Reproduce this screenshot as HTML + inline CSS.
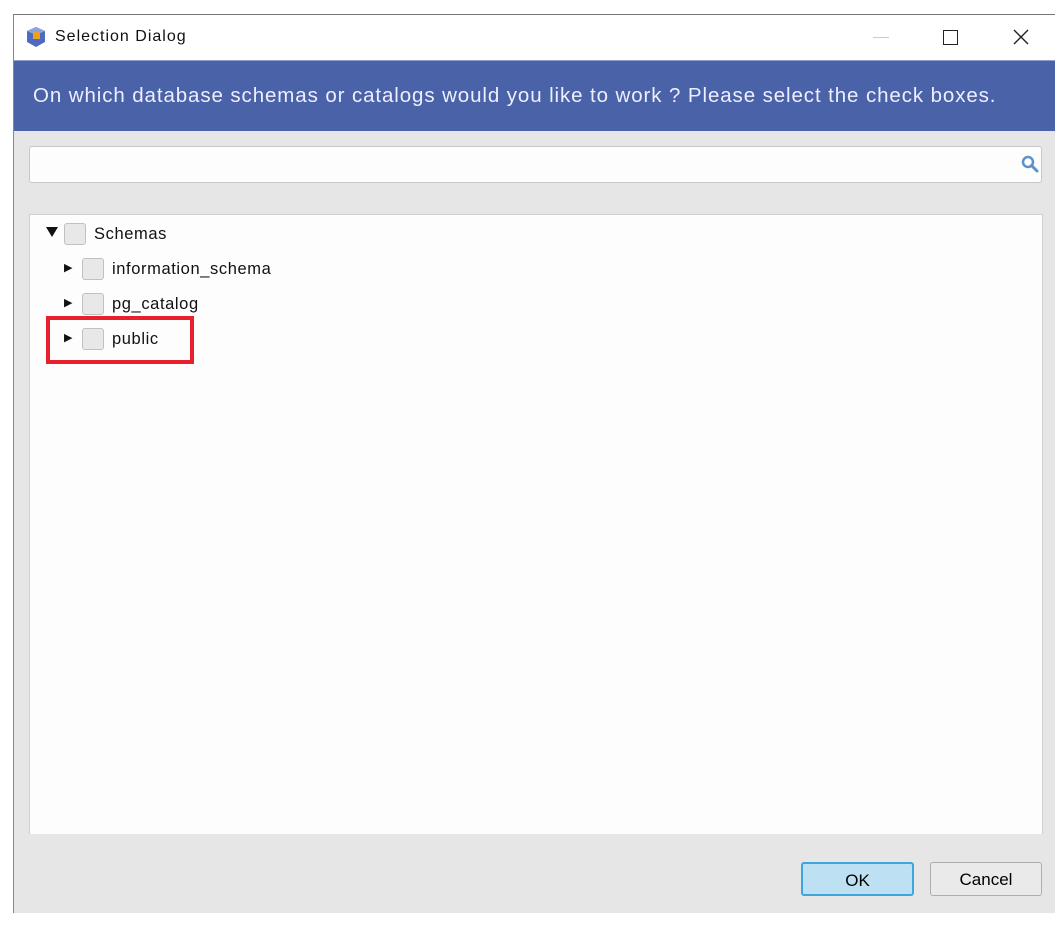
<!DOCTYPE html>
<html><head><style>
body{margin:0;width:1064px;height:926px;background:#fff;position:relative;font-family:"Liberation Sans",sans-serif;overflow:hidden}
.win{position:absolute;left:13px;top:14px;width:1041px;height:898px;border-top:1px solid #777;border-left:1px solid #888;background:#e6e6e6}
.tb{position:absolute;left:0;top:0;width:1041px;height:45px;background:#fff}
.title{position:absolute;left:41px;top:13px;font-size:16px;color:#111;letter-spacing:1px}
.blue{position:absolute;left:0;top:45px;width:1041px;height:70px;background:#4a63a8;border-top:1px solid #8da0d0}
.blue span{position:absolute;left:19px;top:23px;font-size:20.5px;color:#eef;letter-spacing:0.9px;white-space:nowrap}
.search{position:absolute;left:15px;top:131px;width:1011px;height:35px;background:#fdfdfd;border:1px solid #c8c8c8;border-radius:3px}
.tree{position:absolute;left:15px;top:199px;width:1012px;height:619px;background:#fdfdfd;border:1px solid #d0d0d0;border-bottom:none}
.row{position:absolute;height:24px;font-size:16.5px;color:#111;letter-spacing:0.6px;white-space:nowrap}
.cb{position:absolute;width:22px;height:22px;border:1px solid #c0c0c0;border-radius:3px;background:#e8e8e8;box-sizing:border-box}
.arr{position:absolute;font-size:11px}
.lbl{position:absolute;top:2px}
.btn{position:absolute;top:847px;height:34px;border-radius:3px;font-size:17px;text-align:center;line-height:33px;box-sizing:border-box}
</style></head><body>
<div class="win">
<div class="tb">
<svg style="position:absolute;left:10px;top:10px" width="24" height="24" viewBox="0 0 24 24"><path d="M12 2 L21 6 V17 L12 22 L3 17 V6Z" fill="#4d6bbf"/><path d="M12 2 L21 6 L12 10 L3 6Z" fill="#8aa3e0"/><rect x="9" y="7" width="7" height="7" fill="#f0a020"/></svg>
<div class="title">Selection Dialog</div>
<div style="position:absolute;left:859px;top:22px;width:16px;height:1px;background:#ccc"></div>
<div style="position:absolute;left:929px;top:15px;width:13px;height:13px;border:1.5px solid #222"></div>
<svg style="position:absolute;left:999px;top:14px" width="16" height="16"><path d="M1 1L15 15M15 1L1 15" stroke="#222" stroke-width="1.4"/></svg>
</div>
<div class="blue"><span>On which database schemas or catalogs would you like to work ? Please select the check boxes.</span></div>
<div class="search"><svg style="position:absolute;right:2px;top:8px" width="18" height="18"><circle cx="7" cy="7" r="5" stroke="#5b93c9" stroke-width="2.5" fill="none"/><path d="M10.5 10.5L16 16" stroke="#5b93c9" stroke-width="3" stroke-linecap="round"/></svg></div>
<div class="tree">
<div class="row" style="left:16px;top:8px"><svg style="position:absolute;left:0;top:4px" width="12" height="10"><path d="M0 0H12L6 10Z" fill="#111"/></svg><div class="cb" style="left:18px;top:0"></div><span class="lbl" style="left:48px">Schemas</span></div>
<div class="row" style="left:34px;top:43px"><span class="arr" style="left:0;top:3px">▶</span><div class="cb" style="left:18px;top:0"></div><span class="lbl" style="left:48px">information_schema</span></div>
<div class="row" style="left:34px;top:78px"><span class="arr" style="left:0;top:3px">▶</span><div class="cb" style="left:18px;top:0"></div><span class="lbl" style="left:48px">pg_catalog</span></div>
<div class="row" style="left:34px;top:113px"><span class="arr" style="left:0;top:3px">▶</span><div class="cb" style="left:18px;top:0"></div><span class="lbl" style="left:48px">public</span></div>
<div style="position:absolute;left:16px;top:101px;width:148px;height:48px;border:4px solid #e8202a;box-sizing:border-box"></div>
</div>
<div class="btn" style="left:787px;width:113px;background:#bde0f2;border:2px solid #3ea6dc">OK</div>
<div class="btn" style="left:916px;width:112px;background:#eaeaea;border:1px solid #adadad">Cancel</div>
</div>
</body></html>
